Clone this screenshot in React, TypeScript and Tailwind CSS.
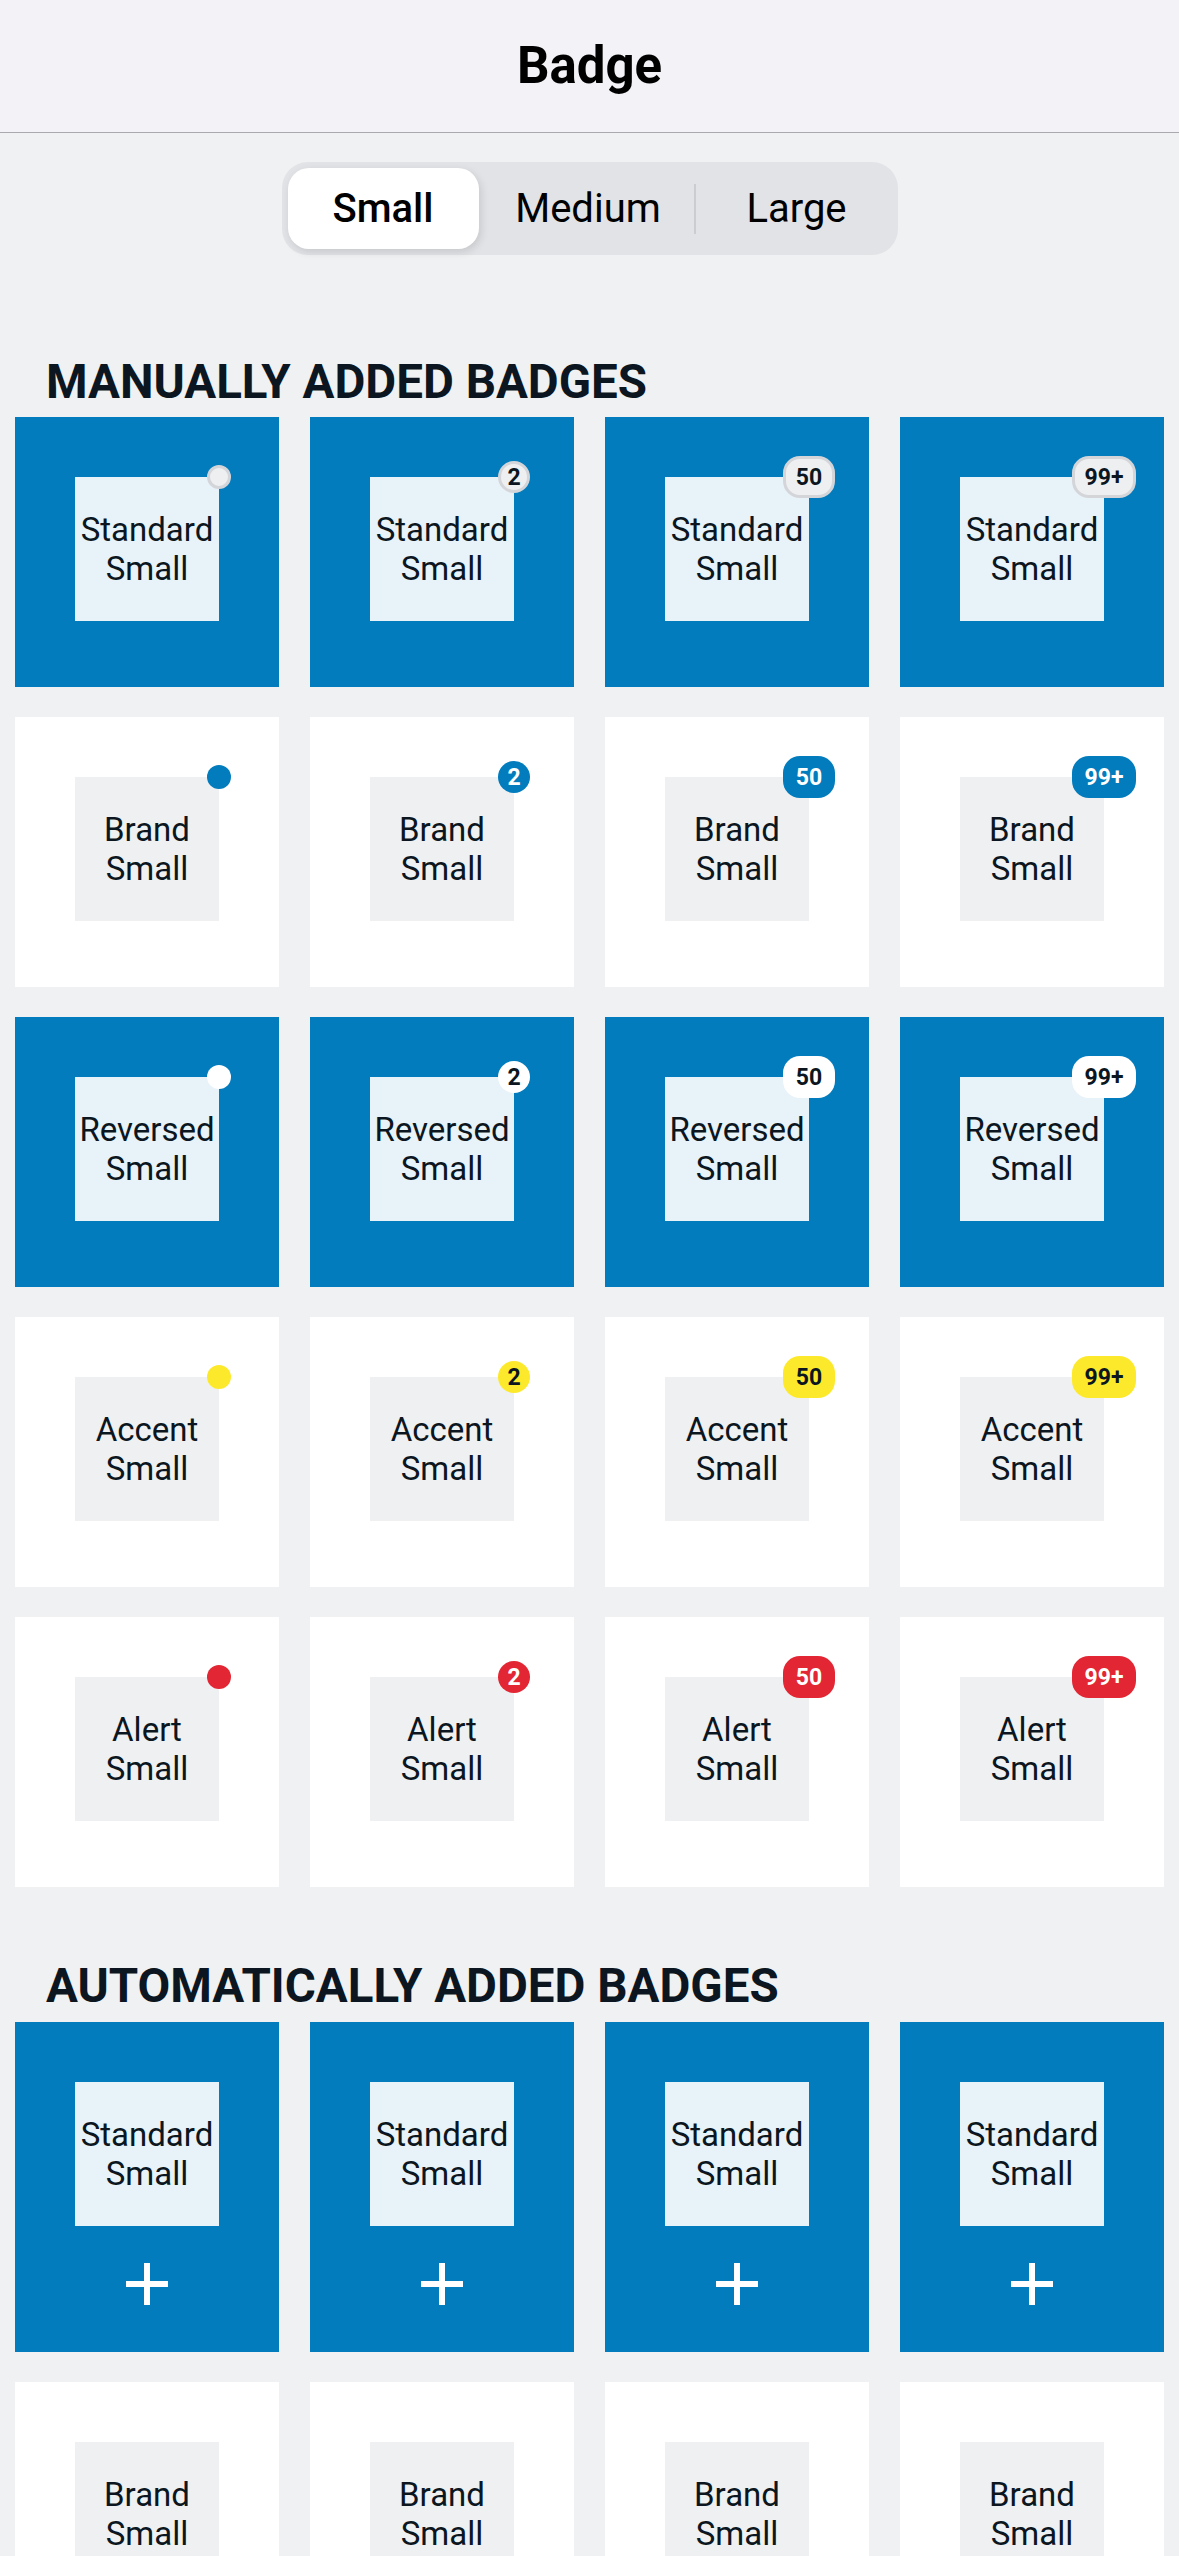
import React from "react"

type Kind = "standard" | "brand" | "reversed" | "accent" | "alert"

const KINDS: { kind: Kind; label: string; dark: boolean }[] = [
  { kind: "standard", label: "Standard", dark: true },
  { kind: "brand", label: "Brand", dark: false },
  { kind: "reversed", label: "Reversed", dark: true },
  { kind: "accent", label: "Accent", dark: false },
  { kind: "alert", label: "Alert", dark: false },
]

const VALUES: (string | null)[] = [null, "2", "50", "99+"]

const BADGE_COLORS: Record<Kind, string> = {
  standard: "bg-[#eeeff1] text-[#0b1620] border-[3px] border-[#d4d5d9]",
  brand: "bg-[#027cbd] text-white",
  reversed: "bg-white text-[#0b1620]",
  accent: "bg-[#fde92b] text-[#0b1620]",
  alert: "bg-[#e32633] text-white",
}

function Badge({ kind, value }: { kind: Kind; value: string | null }) {
  const base = `absolute right-0 top-0 translate-x-1/2 -translate-y-1/2 flex items-center justify-center font-bold text-[23px] leading-none ${BADGE_COLORS[kind]}`
  if (value === null) return <span className={`${base} h-[24px] w-[24px] rounded-full`} />
  if (value.length === 1) return <span className={`${base} h-[32px] w-[32px] rounded-full`}>{value}</span>
  return (
    <span className={`${base} h-[42px] rounded-[17px] ${value.length > 2 ? "w-[64px]" : "w-[52px]"}`}>
      {value}
    </span>
  )
}

function Inner({ label, dark, children }: { label: string; dark: boolean; children?: React.ReactNode }) {
  return (
    <div
      className={`relative mx-auto mt-[60px] flex h-[144px] w-[144px] flex-col items-center justify-center text-center text-[33px] leading-[39px] text-[#0b1620] ${dark ? "bg-[#e7f2f9]" : "bg-[#eff0f2]"}`}
    >
      <span>{label}</span>
      <span>Small</span>
      {children}
    </div>
  )
}

function Heading({ children, className }: { children: React.ReactNode; className: string }) {
  return (
    <h2 className={`pl-[46px] text-[47.5px] font-bold leading-[54px] text-[#0b1620] ${className}`}>{children}</h2>
  )
}

function PlusIcon() {
  return (
    <svg width="42" height="42" viewBox="0 0 42 42" className="mx-auto mt-[37px]">
      <path d="M21 0v42M0 21h42" stroke="white" strokeWidth="6" />
    </svg>
  )
}

export default function App() {
  return (
    <div className="h-[2556px] overflow-hidden bg-[#f0f1f3] font-['Roboto',sans-serif]">
      <header className="flex h-[133px] items-center justify-center border-b border-[#a9a9ae] bg-[#f2f2f7]">
        <h1 className="text-[51px] font-bold text-black">Badge</h1>
      </header>

      <div className="mt-[29px] flex justify-center">
        <div className="flex h-[93px] items-center rounded-[26px] bg-[#e2e3e6] px-[6px] text-[40px] text-black">
          <div className="flex h-[81px] w-[191px] items-center justify-center rounded-[21px] bg-white font-medium shadow-[2px_3px_8px_rgba(0,0,0,0.12)]">
            Small
          </div>
          <div className="flex w-[215px] items-center justify-center pl-[4px]">Medium</div>
          <div className="h-[50px] w-[2px] bg-[#cdcdd1]" />
          <div className="flex w-[196px] items-center justify-center pl-[6px]">Large</div>
        </div>
      </div>

      <Heading className="mt-[100px] mb-[8px]">MANUALLY ADDED BADGES</Heading>
      <div className="grid grid-cols-4 gap-x-[31px] gap-y-[30px] px-[15px]">
        {KINDS.map(({ kind, label, dark }) =>
          VALUES.map((v, i) => (
            <div key={kind + i} className={`h-[270px] ${dark ? "bg-[#027cbd]" : "bg-white"}`}>
              <Inner label={label} dark={dark}>
                <Badge kind={kind} value={v} />
              </Inner>
            </div>
          ))
        )}
      </div>

      <Heading className="mt-[72px] mb-[9px]">AUTOMATICALLY ADDED BADGES</Heading>
      <div className="grid grid-cols-4 gap-x-[31px] gap-y-[30px] px-[15px]">
        {KINDS.slice(0, 2).map(({ kind, label, dark }) =>
          VALUES.map((_, i) => (
            <div key={kind + i} className={`h-[330px] ${dark ? "bg-[#027cbd]" : "bg-white"}`}>
              <Inner label={label} dark={dark} />
              {dark && <PlusIcon />}
            </div>
          ))
        )}
      </div>
    </div>
  )
}
